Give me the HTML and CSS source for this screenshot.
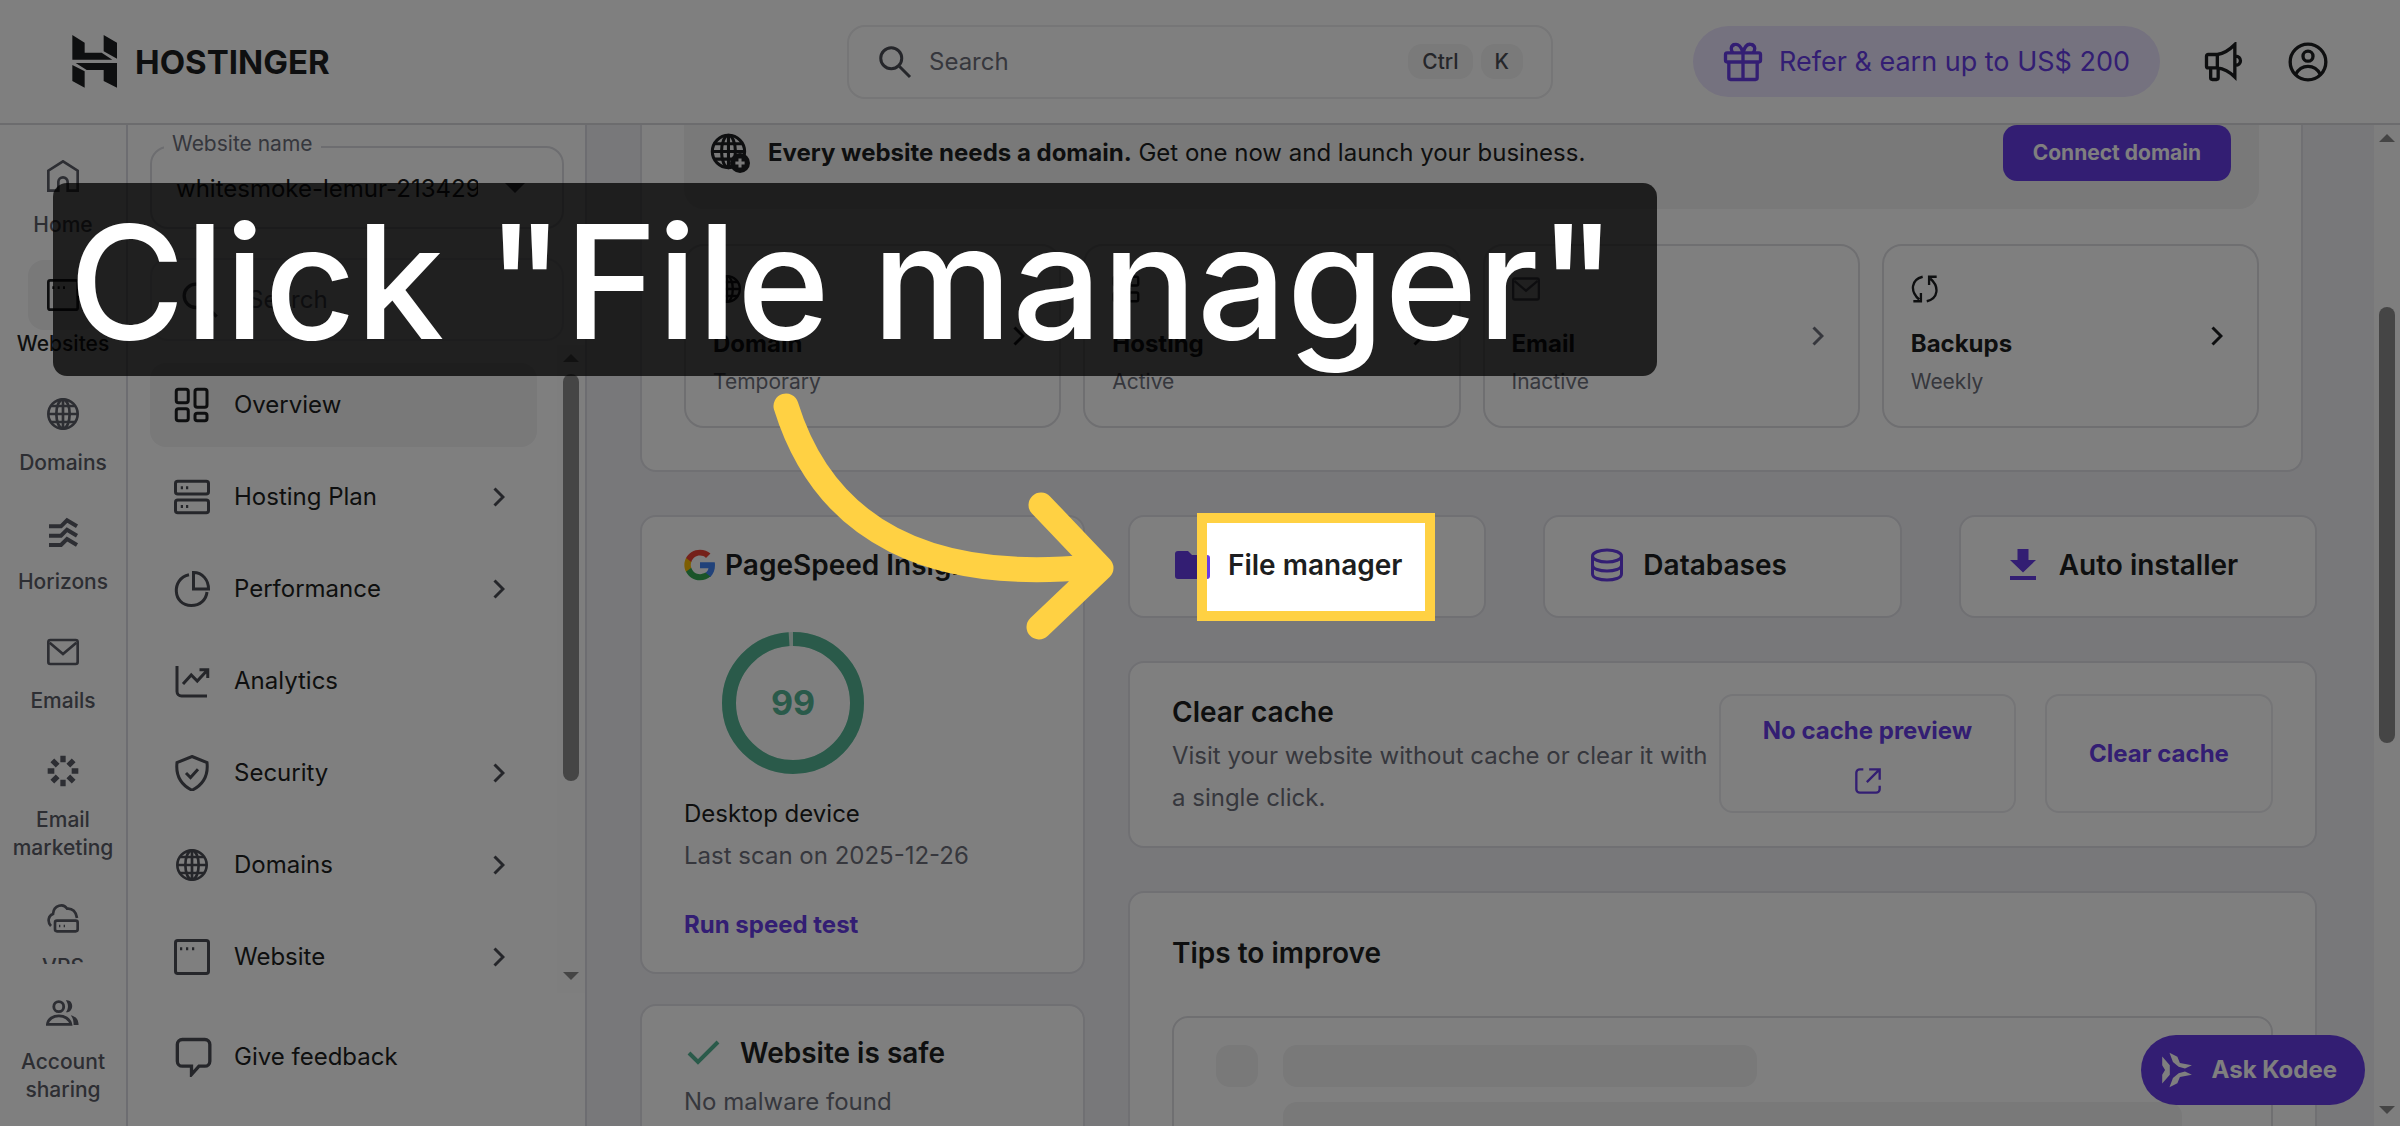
FILE: index.html
```html
<!DOCTYPE html>
<html lang="en">
<head>
<meta charset="UTF-8">
<meta name="viewport" content="width=device-width, initial-scale=1.0">
<title>Hostinger - Website dashboard</title>
<link rel="stylesheet" href="styles.css">
</head>
<body>

<!-- Shared icons -->
<svg class="sprite" aria-hidden="true">
  <symbol id="i-search" viewBox="0 0 24 24"><circle cx="9.5" cy="9.5" r="7"/><path d="M15 15l7 7"/></symbol>
  <symbol id="i-chevron" viewBox="0 0 12 20"><path d="M1.500 1.500L10 10l-8.500 8.500"/></symbol>
  <symbol id="i-globe" viewBox="0 0 24 24"><circle cx="12" cy="12" r="11"/><ellipse cx="12" cy="12" rx="5" ry="11"/><path d="M12 1v22M1 12h22M3 6h18M3 18h18"/></symbol>
  <symbol id="i-window" viewBox="0 0 24 24"><rect x="1" y="1" width="22" height="22" rx="1.500"/><path d="M4 6.500h1.500M8 6.500h1.500M12 6.500h1.500"/></symbol>
  <symbol id="i-mail" viewBox="0 0 24 20"><rect x="1" y="1" width="22" height="18" rx="1.500"/><path d="M2 3l10 8.500L22 3"/></symbol>
</svg>

<header class="header">
  <a class="logo" href="#">
    <svg class="logo-mark" viewBox="0 0 135 159"><path d="M1 0l37 23v30h51l32 21H1zM95 0l40 23v48L95 49zM1 90l37 19v49L1 138zM11 84h124v74l-40-20v-33H44z"/></svg>
    <span>HOSTINGER</span>
  </a>
  <div class="top-search">
    <svg class="icon-36"><use href="#i-search"/></svg>
    <input type="text" placeholder="Search" aria-label="Search">
    <kbd>Ctrl</kbd>
    <kbd>K</kbd>
  </div>
  <div class="header-actions">
    <button class="refer">
      <svg class="icon-40" viewBox="0 0 24 24"><rect x="1.500" y="6.500" width="21" height="5.500" rx="1"/><path d="M3.500 12v9.500a1 1 0 0 0 1 1h15a1 1 0 0 0 1-1V12M12 6.500v16M12 6.500C11 2.500 9 1 7 1.500 4.500 2 4.500 5 6 6.500M12 6.500c1-4 3-5.500 5-5 2.500.5 2.500 3.500 1 5"/></svg>
      Refer &amp; earn up to US$ 200
    </button>
    <button class="icon-button" aria-label="News">
      <svg class="icon-40" viewBox="0 0 24 24"><path d="M8 7.500c4-.5 7-2.500 10.500-6v19.500c-3.500-3.500-6.500-5-10.500-5.500H2.500a1 1 0 0 1-1-1v-6a1 1 0 0 1 1-1zM8 7.500v8M4 15.500v6a1 1 0 0 0 1 1h2.500a1 1 0 0 0 1-1v-6M18.500 8.500c4.500-.5 4.500 6 0 5.500"/></svg>
    </button>
    <button class="icon-button" aria-label="Account">
      <svg class="icon-40" viewBox="0 0 24 24"><circle cx="12" cy="12" r="10.700"/><circle cx="12" cy="8.500" r="3"/><path d="M4.500 19.500c3.500-6.500 11.500-6.500 15 0"/></svg>
    </button>
  </div>
</header>

<div class="layout">

  <nav class="rail">
    <div class="rail-scroll">
      <a class="rail-item" href="#"><span class="rail-icon"><svg class="icon-32" viewBox="0 0 24 24"><path d="M1 23V8l11-7 11 7v15h-7.500v-6.500a3.500 3.500 0 0 0-7 0V23z"/></svg></span>Home</a>
      <a class="rail-item active" href="#"><span class="rail-icon"><svg class="icon-32"><use href="#i-window"/></svg></span>Websites</a>
      <a class="rail-item" href="#"><span class="rail-icon"><svg class="icon-32"><use href="#i-globe"/></svg></span>Domains</a>
      <a class="rail-item" href="#"><span class="rail-icon"><svg class="icon-32" viewBox="0 0 24 24"><path class="thick" d="M1.500 7h9l4.500-4.500L22.500 7M1.500 14h9L15 9.500l7.500 4.500M1.500 21h9l4.500-4.500 7.500 4.500"/></svg></span>Horizons</a>
      <a class="rail-item" href="#"><span class="rail-icon"><svg class="icon-32"><use href="#i-mail"/></svg></span>Emails</a>
      <a class="rail-item" href="#"><span class="rail-icon"><svg class="icon-32" viewBox="0 0 24 24"><path class="spokes" d="M12 .5v5M12 18.500v5M.5 12h5M18.500 12h5M4 4l4 4M16 16l4 4M4 20l4-4M16 8l4-4"/></svg></span>Email marketing</a>
      <a class="rail-item" href="#"><span class="rail-icon"><svg class="icon-32" viewBox="0 0 24 24"><rect x="6" y="14" width="17" height="8" rx="1.500"/><path d="M9 18h1M12.500 18h1M3 18C0 15 1 10 4.500 9c.5-7 8-8 10.500-4 4-.5 7 2.500 7.500 7"/></svg></span>VPS</a>
    </div>
    <div class="rail-bottom">
      <a class="rail-item" href="#"><span class="rail-icon"><svg class="icon-34" viewBox="0 0 24 24"><circle cx="9" cy="7.500" r="3.500"/><path d="M1 20c1-8 15-8 16.500 0z"/><path class="solid" d="M14 3c6-1 6 9 0 8.500 2-2.500 2-6 0-8.500zM17.500 13.500c4 1 5.500 3.500 5.500 7h-3.500c0-3-.5-5-2-7z"/></svg></span>Account sharing</a>
    </div>
  </nav>

  <aside class="sidebar">
    <div class="site-select">
      <label for="site">Website name</label>
      <select id="site"><option>whitesmoke-lemur-213429</option></select>
    </div>
    <div class="side-search">
      <svg class="icon-40"><use href="#i-search"/></svg>
      <input type="text" placeholder="Search" aria-label="Search menu">
    </div>
    <div class="side-scroll">
      <nav class="menu">
        <a class="menu-item active" href="#"><svg class="icon-36" viewBox="0 0 24 24"><rect x="1.500" y="1.500" width="8" height="9" rx="1.500"/><rect x="14" y="1.500" width="8" height="12" rx="1.500"/><rect x="1.500" y="14.500" width="8" height="8" rx="1.500"/><rect x="14" y="17.500" width="8" height="5" rx="1.500"/></svg><span>Overview</span></a>
        <a class="menu-item" href="#"><svg class="icon-36" viewBox="0 0 24 24"><rect x="1" y="1.500" width="22" height="8.500" rx="1.500"/><rect x="1" y="14" width="22" height="8.500" rx="1.500"/><path d="M4.500 5.800H6M8 5.800h1.500M4.500 18.300H6M8 18.300h1.500"/></svg><span>Hosting Plan</span><svg class="chevron"><use href="#i-chevron"/></svg></a>
        <a class="menu-item" href="#"><svg class="icon-36" viewBox="0 0 24 24"><path d="M13 1v11h10C23 6 19 1 13 1zM10 2.500C-2 5-1 23 11.500 23c6 0 10-4 10.500-9"/></svg><span>Performance</span><svg class="chevron"><use href="#i-chevron"/></svg></a>
        <a class="menu-item" href="#"><svg class="icon-36" viewBox="0 0 24 24"><path d="M2 2v17a3 3 0 0 0 3 3h17M6 14l5.500-6 4 4L22 5M17 4.500h5.500V10"/></svg><span>Analytics</span></a>
        <a class="menu-item" href="#"><svg class="icon-36" viewBox="0 0 24 24"><path d="M12 1L22 5c1 9-3 15-10 18.500C5 20 1 14 2 5zM8 12l3 3 5-5.500"/></svg><span>Security</span><svg class="chevron"><use href="#i-chevron"/></svg></a>
        <a class="menu-item bold-icon" href="#"><svg class="icon-32"><use href="#i-globe"/></svg><span>Domains</span><svg class="chevron"><use href="#i-chevron"/></svg></a>
        <a class="menu-item" href="#"><svg class="icon-36"><use href="#i-window"/></svg><span>Website</span><svg class="chevron"><use href="#i-chevron"/></svg></a>
      </nav>
      <div class="scrollbar side-bar">
        <i class="arrow-up"></i><i class="thumb"></i><i class="arrow-down"></i>
      </div>
    </div>
    <div class="side-footer">
      <a class="menu-item" href="#"><svg class="icon-40" viewBox="0 0 24 24"><path d="M5 1.500h13.500a3 3 0 0 1 3 3v10a3 3 0 0 1-3 3H15l-4.500 5v-5H5a3 3 0 0 1-3-3v-10a3 3 0 0 1 3-3z"/></svg><span>Give feedback</span></a>
    </div>
  </aside>

  <main class="main">
    <section class="card overview">
      <div class="banner">
        <svg class="icon-40" viewBox="0 0 26 26"><circle cx="12" cy="12" r="10.500"/><ellipse cx="12" cy="12" rx="4.500" ry="10.500"/><path d="M12 1.500v21M1.500 12h21M3 7h18M3 17h12"/><circle class="solid" cx="19.500" cy="19.500" r="6.500"/><path class="plus" d="M19.500 16.500v6M16.500 19.500h6"/></svg>
        <p><strong>Every website needs a domain.</strong> Get one now and launch your business.</p>
        <button class="primary">Connect domain</button>
      </div>
      <div class="tiles">
        <a class="tile" href="#">
          <div><svg class="icon-28"><use href="#i-globe"/></svg><h3>Domain</h3><p>Temporary</p></div>
          <svg class="chevron"><use href="#i-chevron"/></svg>
        </a>
        <a class="tile" href="#">
          <div><svg class="icon-28" viewBox="0 0 24 24"><rect x="1.500" y="1.500" width="7.500" height="7.500" rx="1.500"/><rect x="15" y="1.500" width="7.500" height="7.500" rx="1.500"/><rect x="1.500" y="15" width="7.500" height="7.500" rx="1.500"/><rect x="15" y="15" width="7.500" height="7.500" rx="1.500"/></svg><h3>Hosting</h3><p>Active</p></div>
          <svg class="chevron"><use href="#i-chevron"/></svg>
        </a>
        <a class="tile muted" href="#">
          <div><svg class="icon-28"><use href="#i-mail"/></svg><h3>Email</h3><p>Inactive</p></div>
          <svg class="chevron"><use href="#i-chevron"/></svg>
        </a>
        <a class="tile" href="#">
          <div><svg class="icon-28" viewBox="0 0 24 24"><path d="M10 1.500C0 4 -1 14 7 21M2 22.500h6.500v-7M13.500 22.500c10-2.500 11-12.500 3-19.500M22 1.500h-6.500v7"/></svg><h3>Backups</h3><p>Weekly</p></div>
          <svg class="chevron"><use href="#i-chevron"/></svg>
        </a>
      </div>
    </section>

    <div class="columns">
      <div class="col-left">
        <section class="card speed">
          <h2><svg class="google" viewBox="0 0 48 48"><path fill="#4285f4" d="M46.500 24.500c0-1.600-.1-3.100-.4-4.500H24v9h12.700c-.6 3-2.300 5.400-4.800 7v6h7.700c4.500-4.200 6.900-10.300 6.900-17.500z"/><path fill="#34a853" d="M24 47c6.300 0 11.700-2 15.600-5.600l-7.700-6C29.800 36.800 27.200 37.700 24 37.700c-6.100 0-11.300-4.100-13.100-9.700H3v6.200C6.900 41.900 14.800 47 24 47z"/><path fill="#fbbc05" d="M10.900 28c-1-2.700-1-5.500 0-8.400v-6.100H3c-3.300 6.600-3.300 14 0 20.700z"/><path fill="#ea4335" d="M24 9.900c3.600 0 6.600 1.300 9 3.500l6.700-6.700C35.700 3 30.300 1 24 1 14.800 1 6.900 5.900 3 13.500l7.900 6.100C12.700 14 17.900 9.900 24 9.900z"/></svg>PageSpeed Insights</h2>
          <div class="score">
            <svg viewBox="0 0 142 142"><circle class="track" cx="71" cy="71" r="64"/><circle class="value" cx="71" cy="71" r="64" pathLength="100" stroke-dasharray="99 100"/></svg>
            <span>99</span>
          </div>
          <p>Desktop device</p>
          <p class="grey">Last scan on 2025-12-26</p>
          <a class="link" href="#">Run speed test</a>
        </section>
        <section class="card safe">
          <h2><svg class="check" viewBox="0 0 40 30"><path d="M5 15l9 9L34 4"/></svg>Website is safe</h2>
          <p class="grey">No malware found</p>
        </section>
      </div>

      <div class="col-right">
        <div class="shortcuts">
          <a class="card shortcut" href="#"><svg class="icon-40" viewBox="0 0 40 40"><path class="solid" d="M6 6h10l4 4h15a3 3 0 0 1 3 3v18a3 3 0 0 1-3 3H6a3 3 0 0 1-3-3V9a3 3 0 0 1 3-3z"/></svg>File manager</a>
          <a class="card shortcut" href="#"><svg class="icon-40" viewBox="0 0 40 40"><ellipse cx="20" cy="11" rx="14.500" ry="6"/><path d="M5.500 11v18c0 8 29 8 29 0V11M5.500 20c0 8 29 8 29 0"/></svg>Databases</a>
          <a class="card shortcut" href="#"><svg class="icon-40" viewBox="0 0 40 40"><path class="solid" d="M14.500 4h11v11H33L20 27.500 7 15h7.500zM7 31h26v4H7z"/></svg>Auto installer</a>
        </div>
        <section class="card cache">
          <div class="cache-text">
            <h2>Clear cache</h2>
            <p class="grey">Visit your website without cache or clear it with a single click.</p>
          </div>
          <button class="outline preview">No cache preview
            <svg class="icon-28" viewBox="0 0 24 24"><path d="M8 2H5a3 3 0 0 0-3 3v14a3 3 0 0 0 3 3h14a3 3 0 0 0 3-3v-3M13 2h9v9M21.500 2.500L11 13"/></svg>
          </button>
          <button class="outline">Clear cache</button>
        </section>
        <section class="card tips">
          <h2>Tips to improve</h2>
          <div class="skeleton">
            <i class="skeleton-icon"></i>
            <div class="skeleton-lines"><i class="short"></i><i></i></div>
          </div>
        </section>
      </div>
    </div>
  </main>

  <div class="scrollbar main-bar">
    <i class="arrow-up"></i><i class="thumb"></i><i class="arrow-down"></i>
  </div>
</div>

<button class="kodee">
  <svg class="icon-36" viewBox="0 0 108 114"><path d="M4 14l24 28v30L4 100V72l9-15-9-15zM27 2l25 13 8 20 38 7-22 10-20-5-18-15zM27 112l25-13 8-20 38-7-22-10-20 5-18 15z"/></svg>
  Ask Kodee
</button>

<!-- Tutorial step: spotlight, arrow and caption over the page -->
<div class="spotlight"></div>
<svg class="pointer" viewBox="0 0 360 270"><path d="M26 26C66 155 175 202 330 187M281 125l60 63-62 59"/></svg>
<div class="caption">Click "File manager"</div>

</body>
</html>
```
FILE: styles.css
```css
* { box-sizing: border-box; }

body {
  margin: 0;
  height: 100vh;
  display: flex;
  flex-direction: column;
  overflow: hidden;
  position: relative;
  font-family: Inter, "Liberation Sans", sans-serif;
  font-size: 24px;
  line-height: 42px;
  color: #1d1e20;
  background: #fff;
}

h2, h3, p { margin: 0; }
h2 { font-size: 28px; line-height: 36px; font-weight: 600; display: flex; align-items: center; }
a { color: inherit; text-decoration: none; }
button, input, select { font: inherit; color: inherit; }
button { cursor: pointer; border: none; padding: 0; background: none; }
input { border: none; outline: none; background: none; min-width: 0; flex: 1; padding: 0; }
input::placeholder { color: #6d6f7a; opacity: 1; }

svg { fill: none; stroke: currentColor; stroke-width: 2; flex: none; }
.solid { fill: currentColor; stroke: none; }
.sprite { display: none; }
.icon-28 { width: 28px; height: 28px; }
.icon-32 { width: 32px; height: 32px; }
.icon-34 { width: 34px; height: 34px; }
.icon-36 { width: 36px; height: 36px; }
.icon-40 { width: 40px; height: 40px; }
.chevron { width: 12px; height: 20px; stroke-width: 3; }

/* Header */
.header {
  flex: none;
  height: 125px;
  padding: 0 72px;
  display: grid;
  grid-template-columns: 1fr 706px 1fr;
  align-items: center;
  border-bottom: 2px solid #d8d8dc;
}

.logo { display: flex; align-items: center; gap: 18px; font-size: 33px; font-weight: 700; }
.logo-mark { width: 45px; height: 53px; fill: currentColor; stroke: none; }

.top-search, .side-search {
  display: flex;
  align-items: center;
  border: 2px solid #ececee;
  border-radius: 18px;
}

.top-search { height: 74px; padding: 0 28px; color: #4b4d55; }
.top-search svg { margin-right: 16px; }

kbd {
  margin-left: 8px;
  padding: 0 14px;
  border-radius: 14px;
  background: #f4f4f4;
  font: 500 21px/35px Inter, "Liberation Sans", sans-serif;
}

.header-actions { display: flex; align-items: center; justify-content: flex-end; gap: 44px; }

.refer {
  height: 71px;
  padding: 0 30px;
  display: flex;
  align-items: center;
  gap: 16px;
  border-radius: 36px;
  background: #ebe4ff;
  color: #673de6;
  font-size: 27px;
  white-space: nowrap;
}

.icon-button { width: 40px; height: 40px; }

/* Icon rail */
.layout { flex: 1; min-height: 0; display: flex; }

.rail {
  flex: none;
  width: 128px;
  display: flex;
  flex-direction: column;
  border-right: 2px solid #dadbe2;
}

.rail-scroll {
  flex: 1;
  min-height: 0;
  overflow: hidden;
  padding-top: 16px;
  display: flex;
  flex-direction: column;
  gap: 21px;
}

.rail-bottom { padding: 14px 0 22px; }

.rail-item {
  flex: none;
  display: flex;
  flex-direction: column;
  align-items: center;
  text-align: center;
  font-size: 21px;
  line-height: 28px;
  font-weight: 500;
  color: #5a5c66;
}

.rail-icon { width: 70px; height: 70px; border-radius: 16px; display: grid; place-items: center; }
.rail-item.active { color: #1d1e20; }
.rail-item.active .rail-icon { background: #f2f2f3; }
.thick { stroke-width: 3; }
.spokes { stroke-width: 4; }

/* Sidebar */
.sidebar {
  flex: none;
  width: 459px;
  padding: 21px 0 0 22px;
  display: flex;
  flex-direction: column;
  border-right: 2px solid #dadbe2;
}

.site-select { position: relative; margin-right: 21px; }

.site-select label {
  position: absolute;
  top: -16px;
  left: 14px;
  padding: 0 8px;
  background: #fff;
  font-size: 21px;
  line-height: 28px;
  color: #6d6f7a;
}

.site-select select {
  display: block;
  width: 100%;
  height: 83px;
  padding: 2px 84px 0 24px;
  appearance: none;
  background: #fff;
  border: 2px solid #dadbe0;
  border-radius: 18px;
}

/* drop-down arrow */
.site-select::after {
  content: "";
  position: absolute;
  right: 39px;
  top: 37px;
  border: 10px solid transparent;
  border-top-color: #4b4d55;
  border-bottom: none;
}

.side-search { height: 83px; margin: 29px 21px 4px 0; padding: 0 28px; gap: 28px; color: #4b4d55; }
.side-scroll { flex: 1; min-height: 0; display: flex; }
.menu { flex: 1; padding: 18px 20px 0 0; display: flex; flex-direction: column; gap: 8px; overflow: hidden; }

.menu-item {
  flex: none;
  height: 83px;
  padding: 0 32px 0 24px;
  display: flex;
  align-items: center;
  border-radius: 16px;
}

.menu .menu-item { min-height: 84px; margin-bottom: 0; }
.menu-item span { flex: 1; margin-left: 24px; white-space: nowrap; }
.menu-item svg { color: #4b4d55; }
.menu-item.active { background: #f2f2f3; }
.menu-item.active svg { color: #1d1e20; }
.bold-icon { padding-left: 26px; }
.bold-icon span { margin-left: 26px; }
.side-footer { flex: none; height: 133px; padding-top: 22px; }
.side-footer span { margin-left: 20px; }

/* Scrollbars */
.scrollbar { flex: none; display: flex; flex-direction: column; align-items: center; background: #fcfcfc; }
.arrow-up, .arrow-down { border: 8px solid transparent; }
.arrow-up { border-top: none; border-bottom-color: #8b8b8b; }
.arrow-down { border-bottom: none; border-top-color: #8b8b8b; margin-top: auto; }
.thumb { width: 16px; border-radius: 8px; background: #8b8b8b; }
.side-bar { width: 28px; padding: 9px 0 13px; }
.side-bar .thumb { height: 65%; margin-top: 12px; }
.main-bar { width: 26px; padding: 9px 0 12px; }
.main-bar .thumb { height: 436px; margin-top: 165px; }

/* Main area */
.main { flex: 1; min-width: 0; overflow: hidden; padding: 0 57px 0 53px; background: #f0f0f5; }
.card { background: #fff; border: 2px solid #e0e0e6; border-radius: 16px; }
.grey { color: #6d6f7a; }
.overview { margin: 0 14px 43px 0; padding: 0 42px 42px; border-top: none; border-radius: 0 0 16px 16px; }

.banner {
  height: 84px;
  padding: 0 28px 28px 26px;
  display: flex;
  align-items: center;
  background: #f2f2f3;
  border-radius: 0 0 20px 20px;
}

.banner p { flex: 1; margin-left: 18px; }
.banner strong { font-weight: 700; }
.plus { stroke: #f2f2f3; }

.primary {
  height: 56px;
  padding: 0 30px;
  border-radius: 14px;
  background: #673de6;
  color: #fff;
  font-size: 21px;
  font-weight: 700;
}

.tiles { display: grid; grid-template-columns: repeat(4, 1fr); gap: 22px; margin-top: 35px; }

.tile {
  height: 184px;
  padding: 0 34px 0 27px;
  display: flex;
  align-items: center;
  justify-content: space-between;
  border: 2px solid #dedee3;
  border-radius: 20px;
}

.tile div svg { display: block; }
.tile h3 { margin: 26px 0 8px; font-size: 24px; line-height: 30px; font-weight: 700; }
.tile p { font-size: 21px; line-height: 30px; color: #6d6f7a; }
.tile.muted > svg, .tile.muted div svg { color: #6d6f7a; }

.columns { display: grid; grid-template-columns: 445px 1fr; gap: 43px; }
.col-left, .col-right { display: flex; flex-direction: column; min-width: 0; }
.col-left { gap: 30px; }
.col-right { gap: 43px; }

.speed { padding: 30px 42px 26px; }
.speed h2 { white-space: nowrap; }
.google { width: 32px; height: 32px; margin-right: 9px; stroke: none; }
.score { display: grid; width: 142px; height: 142px; margin: 49px 0 19px 38px; place-items: center; }
.score > * { grid-area: 1 / 1; }
.score svg { width: 142px; height: 142px; transform: rotate(-90deg); stroke-width: 14; }
.score .track { stroke: #d8efe6; }
.score .value { stroke: #54b594; }
.score span { font-size: 34px; font-weight: 700; color: #54b594; }
.link { display: block; margin-top: 27px; font-weight: 700; color: #673de6; }

.safe { height: 200px; padding: 29px 42px; }
.safe h2 { margin-bottom: 10px; }
.check { width: 40px; height: 30px; margin-right: 16px; color: #54b594; stroke-width: 4; }

.shortcuts { display: grid; grid-template-columns: repeat(3, 1fr); gap: 57px; }

.shortcut {
  height: 103px;
  padding: 0 42px 4px;
  display: flex;
  align-items: center;
  gap: 16px;
  font-size: 28px;
  font-weight: 600;
  white-space: nowrap;
}

.shortcut svg { color: #673de6; stroke-width: 3; }

.cache { padding: 31px 42px 27px; display: flex; }
.cache-text { flex: 1; min-width: 0; }
.cache-text p { margin-top: 5px; }

.outline {
  width: 228px;
  height: 119px;
  margin-left: 29px;
  border: 2px solid #ebebef;
  border-radius: 14px;
  color: #673de6;
  font-weight: 700;
  line-height: 36px;
}

.preview { width: 297px; margin-left: 0; padding: 0 30px; }
.preview svg { display: block; margin: 18px auto 0; }

.tips { padding: 42px 42px 0; }

.skeleton {
  height: 200px;
  margin-top: 45px;
  padding: 27px 42px;
  display: flex;
  gap: 25px;
  border: 2px solid #dedee3;
  border-radius: 16px;
}

.skeleton-icon, .skeleton-lines i { height: 42px; border-radius: 14px; background: #f2f2f3; }
.skeleton-icon { width: 42px; }
.skeleton-lines { flex: 1; display: flex; flex-direction: column; gap: 15px; margin-right: 47px; }
.skeleton-lines .short { width: 474px; }

/* Chat button */
.kodee {
  position: absolute;
  right: 35px;
  bottom: 21px;
  height: 70px;
  padding: 0 28px 0 19px;
  display: flex;
  align-items: center;
  gap: 16px;
  border-radius: 35px;
  background: #673de6;
  color: #fff;
  font-weight: 700;
}

.kodee svg { fill: currentColor; stroke: none; }

/* Tutorial overlay: the spread shadow dims everything outside the box */
.spotlight {
  position: absolute;
  left: 1197px;
  top: 513px;
  width: 238px;
  height: 108px;
  border: 10px solid #ffd143;
  box-shadow: 0 0 0 3000px rgba(0, 0, 0, 0.5);
}

.pointer {
  position: absolute;
  left: 760px;
  top: 380px;
  width: 360px;
  height: 270px;
  stroke: #ffd143;
  stroke-width: 25;
  stroke-linecap: round;
  stroke-linejoin: round;
}

.caption {
  position: absolute;
  left: 53px;
  top: 183px;
  height: 193px;
  padding: 0 40px 0 16px;
  border-radius: 14px;
  background: rgba(0, 0, 0, 0.75);
  color: #fff;
  font-size: 158px;
  line-height: 198px;
  font-weight: 500;
  white-space: nowrap;
}
```
